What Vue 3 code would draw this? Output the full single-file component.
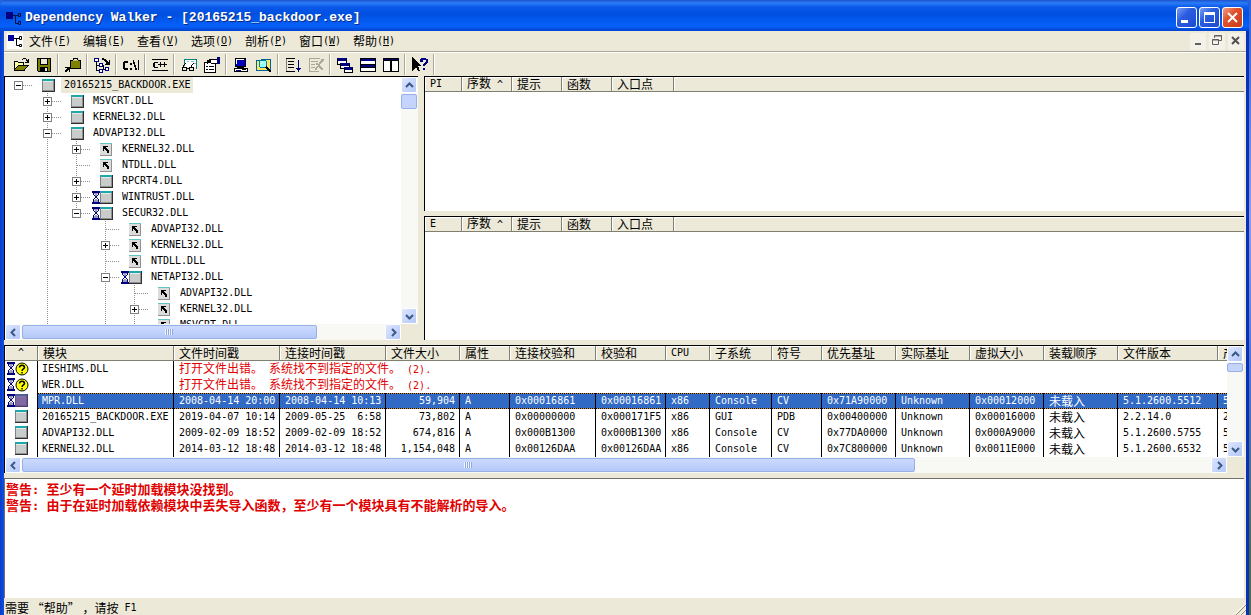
<script setup>
const menus = [
  ['文件', 'F'], ['编辑', 'E'], ['查看', 'V'], ['选项', 'O'],
  ['剖析', 'P'], ['窗口', 'W'], ['帮助', 'H'],
]

const icons = {
  open: '<path fill="#000" d="M1 4h4v1h6v3h-1V6H5V5H2v7H1zM1 13v-1h1v-1h1v-1h1V9h1V8h11v1h-1v1h-1v1h-1v1h-1v2H1zM9 2h1V1h3v1h-3v1H9zM13 2h1v1h1V2h1v4h-4V5h2V4h-1z"/><path fill="#ffffa0" d="M2 5h3v1h5v2H5v1H4v1H3v1H2z"/><path fill="#808000" d="M5 9h9v1h-1v1h-1v1h-1v1H2v-1h1v-1h1v-1h1z"/>',
  save: '<path fill="#000" d="M1 1h14v14H2v-1H1z"/><path fill="#808000" d="M2 2h2v6h8V2h2v12h-2v-4H4v4H2z"/><path fill="#ece9d8" d="M5 2h6v5H5zM9 11h2v3H9z"/>',
  config: '<path fill="#000" d="M8 1h5v2h3v9H5V3h3z"/><path fill="#808000" d="M6 4h9v7H6z"/><path fill="#ece9d8" d="M9 2h3v1H9z"/><path fill="#c0c060" d="M8 3h5v1H8z"/><path fill="#000" d="M0 10h5v5H4v-2H3v1H2v1H0v-2h1v-1h1v-1H0z"/>',
  tree: '<path fill="#000080" d="M0 1h5v4H0zM5 6h4v4H5zM5 12h4v4H5zM11 10h4v4h-4z"/><path fill="#fff" d="M1 2h3v2H1zM6 7h2v2H6zM6 13h2v2H6zM12 11h2v2h-2z"/><path fill="#000" d="M2 5h1v9H2zM3 8h2v1H3zM3 13h2v1H3zM9 8h1v4h1v1H9zM8 1h2v1h2v1h1v1h1v1h1V3h1v5h-5V7h1V5h-1V4h-1V3H8z"/>',
  path: '<path fill="#000" d="M1 4h4v2H2v5h3v2H1v-1H0V5h1zM7 6h2v2H7zM7 11h2v2H7zM10 3h1v2h1v3h1v3h1v2h-2v-3h-1V7h-1zM15 3h1v10h-1z"/>',
  cpp: '<path fill="#000" d="M0 2h16v1H0zM0 13h16v1H0zM2 5h4v1H3v4h3v1H2v-1H1V6h1zM6 7h2V5h1v2h2v1H9v2H8V8H6zM11 7h1V5h1v2h2v1h-2v2h-1V8h-1z"/>',
  glasses: '<path fill="#008080" d="M3 2h12v1H3zM3 3h1v6H3zM15 2h1v10h-1z"/><path fill="#fff" d="M4 3h11v7H4z"/><path fill="#80c0c0" d="M6 4h2v1H6zM10 4h3v1h-3zM12 6h3v1h-3z"/><path fill="none" stroke="#000" d="M1.500 10.500h4v3h-4zM8.500 10.500h4v3h-4zM5.500 11.500h3M2.500 10.500v-2l2-2M10.500 10.500v-2l2-2"/>',
  props: '<path fill="#000" d="M0 5h12v11H0z"/><path fill="#fff" d="M1 6h10v9H1z"/><path fill="#000" d="M2 9h2v1H2zM5 9h5v1H5zM2 12h2v1H2zM5 12h5v1H5zM3 3h2v1h2v1H4v2H3zM5 2h9v1H5zM5 3h2v3H5zM7 6h6v1H7z"/><path fill="#fff" d="M7 3h6v3H7z"/><path fill="#000080" d="M13 0h3v7h-3z"/>',
  computer: '<path fill="#000" d="M2 1h11v9H2zM1 11h14v4H1z"/><path fill="#0000c0" d="M3 2h9v7H3z"/><path fill="#fff" d="M3 2h8v1H4v4H3zM2 12h12v2H2z"/><path fill="#000" d="M4 10h7v1H4zM9 12h4v1H9z"/><path fill="#000080" d="M3 13h5v1H3z"/>',
  search: '<path fill="#0060a0" d="M0 13V3h5V2h10v12H0z"/><path fill="#ffe860" d="M1 4h5V3h8v10H1z"/><circle cx="7" cy="7" r="4" fill="#9ff" stroke="#0080a0"/><path stroke="#000" stroke-width="2" d="M10 10l5 5"/><path stroke="#fff" d="M5 7l2-2"/>',
  order: '<path fill="#000" d="M1 1h9v1H1zM1 14h9v1H1zM3 4h6v1H3zM3 7h6v1H3zM3 10h6v1H3z"/><path fill="#808080" d="M1 2h1v12H1z"/><path fill="#000080" d="M13 3h1v8h2l-2.500 4-2.500-4h2z"/>',
  stop: '<path fill="#aca899" d="M1 1h11v1H2v12h9v1H1zM3 4h7v1H3zM3 7h4v1H3zM3 10h4v1H3zM13 2h3v2h-1v1h-1v1h-1v1h-1v2h1v1h1v1h1v2h-2v-1h-1v-1h-1v-1h-1v1H9v2H7v-2h1v-1h1V9h1V8H8V6h2v1h1V5h1V4h1z"/>',
  cascade: '<path fill="#000080" d="M0 1h10v3H0zM3 6h10v3H3zM7 10h9v3H7z"/><path fill="#fff" d="M1 4h8v2H1zM4 9h8v1H4zM8 13h7v2H8z"/><path fill="none" stroke="#000" d="M.5 1.500v6h3M9.500 1.500v4M3.500 6.500v5h4M12.500 6.500v4M7.500 10.500v5h8v-5"/>',
  horizontal: '<path fill="#000" d="M0 1h16v14H0z"/><path fill="#fff" d="M1 4h14v3H1zM1 11h14v3H1z"/><path fill="#000080" d="M1 2h14v2H1zM1 8h14v2H1z"/>',
  vertical: '<path fill="#000" d="M0 1h16v14H0z"/><path fill="#fff" d="M1 4h6v10H1zM9 4h6v10H9z"/><path fill="#000080" d="M1 2h6v1H1zM9 2h6v1H9z"/>',
  help: '<path fill="#000" d="M0 0l9 9H6l2 5H6l-2-4-4 4z"/><path fill="#000080" d="M9 1h5v1h2v4h-1v1h-1v1h-1v1h-2V7h1V6h1V5h1V3h-3v2H8V2h1zM11 11h2v2h-2z"/>',
}

const tools = [
  [['open', '打开'], ['save', '保存']],
  [['config', '配置']],
  [['tree', '自动展开']],
  [['path', '完整路径']],
  [['cpp', '还原 C++ 函数']],
  [['glasses', '查看模块'], ['props', '属性']],
  [['computer', '系统信息'], ['search', '搜索顺序']],
  [['order', '开始剖析'], ['stop', '停止剖析']],
  [['cascade', '层叠'], ['horizontal', '水平平铺'], ['vertical', '垂直平铺']],
  [['help', '上下文帮助']],
]

/* guides: one code per indent column.
   ' ' blank, '|' line through, '+' / '-' box, 'T' branch.
   up / down: whether the line goes on above and below the node */
const nodes = [
  { name: '20165215_BACKDOOR.EXE', guides: '-', up: false, down: false, kind: 'module', selected: true },
  { name: 'MSVCRT.DLL', guides: ' +', up: true, down: true, kind: 'module' },
  { name: 'KERNEL32.DLL', guides: ' +', up: true, down: true, kind: 'module' },
  { name: 'ADVAPI32.DLL', guides: ' -', up: true, down: true, kind: 'module' },
  { name: 'KERNEL32.DLL', guides: ' |+', up: true, down: true, kind: 'dup' },
  { name: 'NTDLL.DLL', guides: ' |T', up: true, down: true, kind: 'dup' },
  { name: 'RPCRT4.DLL', guides: ' |+', up: true, down: true, kind: 'module' },
  { name: 'WINTRUST.DLL', guides: ' |+', up: true, down: true, kind: 'module', delay: true },
  { name: 'SECUR32.DLL', guides: ' |-', up: true, down: false, kind: 'module', delay: true },
  { name: 'ADVAPI32.DLL', guides: ' | T', up: true, down: true, kind: 'dup' },
  { name: 'KERNEL32.DLL', guides: ' | +', up: true, down: true, kind: 'dup' },
  { name: 'NTDLL.DLL', guides: ' | T', up: true, down: true, kind: 'dup' },
  { name: 'NETAPI32.DLL', guides: ' | -', up: true, down: true, kind: 'module', delay: true },
  { name: 'ADVAPI32.DLL', guides: ' | |T', up: true, down: true, kind: 'dup' },
  { name: 'KERNEL32.DLL', guides: ' | |+', up: true, down: true, kind: 'dup' },
  { name: 'MSVCRT.DLL', guides: ' | |T', up: true, down: true, kind: 'dup' },
]

const lists = [
  { id: 'imports', label: '导入', first: 'PI' },
  { id: 'exports', label: '导出', first: 'E' },
]

const columns = [
  ['^', 33], ['模块', 136], ['文件时间戳', 106], ['连接时间戳', 106], ['文件大小', 74],
  ['属性', 50], ['连接校验和', 86], ['校验和', 70], ['CPU', 44], ['子系统', 62],
  ['符号', 50], ['优先基址', 74], ['实际基址', 74], ['虚拟大小', 74], ['装载顺序', 74],
  ['文件版本', 100], ['产品版本', 100],
]

const missing = ['IESHIMS.DLL', 'WER.DLL']

const modules = [
  ['MPR.DLL', '2008-04-14 20:00', '2008-04-14 10:13', '59,904', 'A', '0x00016861', '0x00016861', 'x86', 'Console', 'CV', '0x71A90000', 'Unknown', '0x00012000', '未载入', '5.1.2600.5512', '5.1.2600.5512'],
  ['20165215_BACKDOOR.EXE', '2019-04-07 10:14', '2009-05-25  6:58', '73,802', 'A', '0x00000000', '0x000171F5', 'x86', 'GUI', 'PDB', '0x00400000', 'Unknown', '0x00016000', '未载入', '2.2.14.0', '2.2.14.0'],
  ['ADVAPI32.DLL', '2009-02-09 18:52', '2009-02-09 18:52', '674,816', 'A', '0x000B1300', '0x000B1300', 'x86', 'Console', 'CV', '0x77DA0000', 'Unknown', '0x000A9000', '未载入', '5.1.2600.5755', '5.1.2600.5755'],
  ['KERNEL32.DLL', '2014-03-12 18:48', '2014-03-12 18:48', '1,154,048', 'A', '0x00126DAA', '0x00126DAA', 'x86', 'Console', 'CV', '0x7C800000', 'Unknown', '0x0011E000', '未载入', '5.1.2600.6532', '5.1.2600.6532'],
]

const isHan = (text) => /[\u4e00-\u9fff]/.test(text)

const hourglass = '<path fill="#000080" d="M0 0h8v2H0zM0 11h8v2H0zM1 2h1v2H1zM6 2h1v2H6zM2 4h1v1H2zM5 4h1v1H5zM3 5h2v2H3zM2 7h1v1H2zM5 7h1v1H5zM1 8h1v3H1zM6 8h1v3H6z"/><path fill="#9a9ab8" d="M2 2h4v1H2zM3 3h2v2H3zM3 8h2v1H3zM2 9h4v2H2z"/>'
const moduleIcon = '<path fill="#303030" d="M0 0h13v13H0z"/><path fill="#e8e8e8" d="M0 0h12v12H0z"/><path fill="#808080" d="M0 0h1v12H0z"/><path fill="#c8ccca" d="M1 3h10v8H1z"/><path fill="#20a8a8" d="M0 0h12v2H0z"/><path fill="#909090" d="M11 2h1v10h-1zM1 11h11v1H1z"/>'
const dupIcon = '<path fill="#909090" d="M0 0h12v13H0z"/><path fill="#dcdcdc" d="M0 1h11v11H0z"/><path fill="#60c4c0" d="M0 0h12v1H0z"/><path fill="#000" d="M3 3h5v1H6v1h1v1h1v1h1v3H7V8H6V7H5V6H4v2H3z"/>'
</script>

<template>
  <div class="window">
    <header class="title">
      <svg class="app-icon" viewBox="0 0 16 16"><path fill="#000080" d="M1 2h7v7H1z" /><path fill="none" stroke="#001040" d="M8 5.500h5M10.500 5.500v8h3M13.500 3.500h2v3h-2zM13.500 11.500h2v3h-2z" /></svg>
      <h1>Dependency Walker - [20165215_backdoor.exe]</h1>
      <div class="caption">
        <button aria-label="最小化"><svg viewBox="0 0 19 19"><path fill="#fff" d="M4 12h7v3H4z" /></svg></button>
        <button aria-label="最大化"><svg viewBox="0 0 19 19"><path fill="#fff" fill-rule="evenodd" d="M4 4h11v11H4zM5 7v7h9V7z" /></svg></button>
        <button class="close" aria-label="关闭"><svg viewBox="0 0 19 19"><path stroke="#fff" stroke-width="2" d="M5 5l9 9M14 5l-9 9" /></svg></button>
      </div>
    </header>

    <div class="menubar">
      <svg class="doc-icon" viewBox="0 0 16 16"><path fill="#fff" d="M0 0h16v16H0z" /><path fill="#0000a0" d="M1 2h6v6H1z" /><path fill="none" stroke="#000" d="M7 5.500h5M9.500 5.500v7h3M12.500 3.500h2v3h-2zM12.500 11.500h2v2h-2z" /></svg>
      <nav>
        <button v-for="[name, key] in menus" :key="key" class="menu"><span class="han">{{ name }}</span>(<u>{{ key }}</u>)</button>
      </nav>
      <div class="child-caption">
        <button aria-label="最小化文档"><svg viewBox="0 0 14 14"><path fill="#606060" d="M4 9h6v2H4z" /></svg></button>
        <button aria-label="还原文档"><svg viewBox="0 0 14 14"><path fill="none" stroke="#606060" d="M4.500 4V1.500h7v5H9M2.500 5.500h6v5h-6zM2 6h7M4 2h8" /></svg></button>
        <button aria-label="关闭文档"><svg viewBox="0 0 14 14"><path stroke="#505050" stroke-width="2" d="M3 3l7 7M10 3l-7 7" /></svg></button>
      </div>
    </div>

    <div class="toolbar">
      <div v-for="(group, g) in tools" :key="g" class="group">
        <button v-for="[id, label] in group" :key="id" :aria-label="label"><svg viewBox="0 0 16 16" v-html="icons[id]"></svg></button>
      </div>
    </div>

    <main class="work">
      <div class="upper">
        <section class="panel scroller" aria-label="依赖树">
          <ul class="tree">
            <li v-for="(node, n) in nodes" :key="n">
              <svg v-for="(code, c) in node.guides.split('')" :key="c" class="guide" viewBox="0 0 29 16">
                <g fill="none" stroke="#909090" stroke-dasharray="1 1">
                  <path v-if="code === '|'" d="M13.500 0v16" />
                  <template v-if="'+-T'.includes(code)">
                    <path v-if="node.up" d="M13.500 0v8" />
                    <path v-if="node.down" d="M13.500 8v8" />
                    <path d="M14 8.500h14" />
                  </template>
                </g>
                <template v-if="'+-'.includes(code)">
                  <path fill="#fff" stroke="#808080" d="M9.500 4.500h8v8h-8z" />
                  <path fill="#000" d="M11 8h5v1h-5z" />
                  <path v-if="code === '+'" fill="#000" d="M13 6h1v5h-1z" />
                </template>
              </svg>
              <svg class="delay" viewBox="0 0 8 13" v-html="node.delay ? hourglass : ''"></svg>
              <svg class="module" viewBox="0 0 13 13" v-html="node.kind === 'dup' ? dupIcon : moduleIcon"></svg>
              <span class="label" :class="{ selected: node.selected }">{{ node.name }}</span>
            </li>
          </ul>
          <div class="bar vertical">
            <button aria-label="向上"><svg viewBox="0 0 9 9"><path d="M1 6l3.500-3.500L8 6" /></svg></button>
            <div class="track"><div class="thumb small"></div></div>
            <button aria-label="向下"><svg viewBox="0 0 9 9"><path d="M1 3l3.500 3.500L8 3" /></svg></button>
          </div>
          <div class="bar horizontal">
            <button aria-label="向左"><svg viewBox="0 0 9 9"><path d="M6 1L2.500 4.500 6 8" /></svg></button>
            <div class="track"><div class="thumb tree-thumb"><i></i></div></div>
            <button aria-label="向右"><svg viewBox="0 0 9 9"><path d="M3 1l3.500 3.500L3 8" /></svg></button>
          </div>
        </section>

        <div class="lists">
          <section v-for="list in lists" :key="list.id" class="panel" :aria-label="list.label">
            <table class="grid">
              <colgroup><col class="w37"><col class="w50"><col class="w50"><col class="w50"><col class="w62"><col></colgroup>
              <thead>
                <tr>
                  <th>{{ list.first }}</th>
                  <th><span class="han">序数</span> ^</th>
                  <th class="han">提示</th>
                  <th class="han">函数</th>
                  <th class="han">入口点</th>
                  <th></th>
                </tr>
              </thead>
            </table>
          </section>
        </div>
      </div>

      <section class="panel scroller" aria-label="模块列表">
        <div class="view">
          <table class="grid modules">
            <colgroup><col v-for="[name, width] in columns" :key="name" :style="{ width: width + 'px' }"></colgroup>
            <thead>
              <tr><th v-for="[name] in columns" :key="name" :class="{ han: isHan(name), sort: name === '^' }">{{ name }}</th></tr>
            </thead>
            <tbody>
              <tr v-for="name in missing" :key="name">
                <td class="mark">
                  <svg class="delay" viewBox="0 0 8 13" v-html="hourglass"></svg>
                  <svg class="unknown" viewBox="0 0 14 14"><circle cx="7" cy="7" r="6" fill="#ff0" stroke="#000" /><path fill="none" stroke="#000" stroke-width="1.500" d="M4.500 5.500c0-3 5-3 5 0 0 1.500-2.500 1.500-2.500 3.500M7 10v1.500" /></svg>
                </td>
                <td>{{ name }}</td>
                <td class="error" colspan="15"><span class="han">打开文件出错。</span> <span class="han">系统找不到指定的文件。</span> (2).</td>
              </tr>
              <tr v-for="(row, r) in modules" :key="row[0]" :class="{ current: r === 0 }">
                <td class="mark">
                  <svg class="delay" viewBox="0 0 8 13" v-html="r === 0 ? hourglass : ''"></svg>
                  <svg class="module" viewBox="0 0 13 13">
                    <g v-html="moduleIcon"></g>
                    <path v-if="r === 0" fill="#604090" fill-opacity=".7" d="M0 0h13v13H0z" />
                  </svg>
                </td>
                <td v-for="(cell, c) in row" :key="c" :class="{ han: isHan(cell), size: c === 3 }">{{ cell }}</td>
              </tr>
            </tbody>
          </table>
        </div>
        <div class="bar vertical">
          <button aria-label="向上"><svg viewBox="0 0 9 9"><path d="M1 6l3.500-3.500L8 6" /></svg></button>
          <div class="track"><div class="thumb tiny"></div></div>
          <button aria-label="向下"><svg viewBox="0 0 9 9"><path d="M1 3l3.500 3.500L8 3" /></svg></button>
        </div>
        <div class="bar horizontal">
          <button aria-label="向左"><svg viewBox="0 0 9 9"><path d="M6 1L2.500 4.500 6 8" /></svg></button>
          <div class="track"><div class="thumb module-thumb"><i></i></div></div>
          <button aria-label="向右"><svg viewBox="0 0 9 9"><path d="M3 1l3.500 3.500L3 8" /></svg></button>
        </div>
      </section>

      <section class="panel log" aria-label="日志">
        <p>警告<span>: </span>至少有一个延时加载模块没找到。</p>
        <p>警告<span>: </span>由于在延时加载依赖模块中丢失导入函数，至少有一个模块具有不能解析的导入。</p>
      </section>
    </main>

    <footer class="status">
      <span class="han">需要 “帮助” ，请按</span>&nbsp;F1
      <svg class="grip" viewBox="0 0 11 10"><path stroke="#fff" d="M0 9L9 0M5 10l6-6" /><path stroke="#908c78" stroke-width="1" d="M1 10l10-10M6 10l5-5" /></svg>
    </footer>
  </div>
</template>

<style>
body {
  margin: 0;
  background: linear-gradient(#2a62dc, #8d9be8 35%, #4c74d8 60%, #4d6a4c 90%);
}
</style>

<style scoped>
.window {
  box-sizing: border-box;
  display: flex;
  flex-direction: column;
  height: 100vh;
  margin-right: 2px;
  padding: 0 3px 0 4px;
  overflow: hidden;
  border-radius: 6px 6px 0 0;
  background: linear-gradient(90deg, #0a3bc8 0, #0f4fe0 4px, #0f4fe0 50%, #0831b8 100%);
  color: #000;
  font: 10px/16px "DejaVu Sans Mono", "Noto Sans CJK SC", monospace;
}
button {
  box-sizing: border-box;
  display: flex;
  align-items: center;
  justify-content: center;
  margin: 0;
  padding: 0;
  border: 0;
  background: none;
  color: inherit;
  font: inherit;
}
svg { flex: none; display: block; }
.han { font-family: "Noto Sans CJK SC", sans-serif; font-size: 12px; }

.title {
  display: flex;
  align-items: center;
  flex: none;
  height: 31px;
  margin: 0 -3px 0 -4px;
  padding: 4px 6px 0 5px;
  box-sizing: border-box;
  background: linear-gradient(#1d52cc 0, #2b7cf8 3px, #0a58ea 7px, #0050e0 14px, #0560fa 26px, #0044d0 31px);
}
.app-icon { width: 16px; height: 16px; }
.title h1 {
  flex: 1;
  margin: 0 0 0 4px;
  color: #fff;
  font: bold 13px/18px "Liberation Mono", monospace;
  text-shadow: 1px 1px #0a2a80;
  white-space: nowrap;
}
.caption { display: flex; gap: 2px; }
.caption button {
  width: 21px;
  height: 21px;
  border: 1px solid #fff;
  border-radius: 3px;
  background: linear-gradient(135deg, #7aa0f4, #2a5ce0 40%, #1c4ad0);
}
.caption .close { background: linear-gradient(135deg, #f0a088, #e0512c 40%, #c83c18); }
.caption svg { width: 19px; height: 19px; }

.menubar {
  display: flex;
  align-items: center;
  flex: none;
  height: 20px;
  padding: 0 2px 0 3px;
  border-bottom: 1px solid #aca899;
  background: #ece9d8;
}
.doc-icon { width: 16px; height: 16px; }
nav { display: flex; flex: 1; }
.menu { width: 54px; height: 19px; }
.child-caption { display: flex; gap: 3px; }
.child-caption button { width: 16px; height: 17px; background: #f3f1e8; }
.child-caption svg { width: 14px; height: 14px; }

.toolbar {
  display: flex;
  align-items: center;
  flex: none;
  height: 23px;
  padding: 0 5px;
  border-top: 1px solid #fff;
  background: #ece9d8;
}
.group { display: flex; margin-right: 2px; padding-right: 2px; border-right: 1px solid #aca899; box-shadow: 1px 0 #fff; }
.group + .group { padding-left: 1px; }
.group button { width: 23px; height: 21px; }
.group svg { width: 16px; height: 16px; shape-rendering: crispEdges; }

.work {
  display: grid;
  grid-template-rows: 264fr 128fr 120fr;
  grid-template-columns: minmax(0, 1fr);
  gap: 5px;
  flex: 1;
  min-height: 0;
  padding: 0 2px 2px 0;
  background: #ece9d8;
}
.upper { display: grid; grid-template-columns: 414fr 820fr; gap: 6px; min-height: 0; }
.lists { display: grid; grid-template-rows: 135fr 124fr; gap: 5px; min-width: 0; }
.panel {
  box-sizing: border-box;
  min-width: 0;
  min-height: 0;
  overflow: hidden;
  border-top: 1px solid #000;
  border-left: 1px solid #000;
  background: #fff;
}
.scroller { display: grid; grid-template: minmax(0, 1fr) 16px / minmax(0, 1fr) 17px; background: #ece9d8; }

.tree { margin: 0; padding: 0; overflow: hidden; background: #fff; list-style: none; }
.tree li { display: flex; align-items: center; height: 16px; }
.guide { width: 29px; height: 16px; shape-rendering: crispEdges; }
.delay { width: 8px; height: 13px; shape-rendering: crispEdges; }
.module { width: 13px; height: 13px; shape-rendering: crispEdges; }
.label { margin-left: 6px; padding: 0 3px; white-space: nowrap; }
.label.selected { background: #ece9d8; }

.bar { display: flex; background: #f8f8f4; }
.bar.vertical { flex-direction: column; }
.bar button {
  flex: none;
  width: 16px;
  height: 16px;
  border: 1px solid #fff;
  border-radius: 2px;
  background: linear-gradient(135deg, #dce6ff, #b4c8f8);
}
.bar button svg { width: 9px; height: 9px; }
.bar path { fill: none; stroke: #3c5888; stroke-width: 2; }
.track { display: flex; flex: 1; min-width: 0; min-height: 0; }
.vertical .track { flex-direction: column; }
.thumb {
  box-sizing: border-box;
  display: flex;
  align-items: center;
  justify-content: center;
  border: 1px solid #98b0e8;
  border-radius: 2px;
  background: #c4d4fc;
}
.horizontal .thumb { margin: 1px; background: linear-gradient(#ccdaff, #b4c8f8); }
.small { height: 15px; margin: 1px 1px 0 0; }
.tiny { height: 9px; margin: 1px 1px 0 0; }
.tree-thumb { width: 81%; }
.module-thumb { width: 75%; }
.thumb i { width: 8px; height: 6px; background: repeating-linear-gradient(90deg, #f0f4ff 0 1px, #90a8e0 1px 2px); }

.view { overflow: hidden; background: #fff; }
.grid { width: 100%; border-spacing: 0; table-layout: fixed; }
.grid .han { line-height: 12px; }
.w37 { width: 37px; }
.w50 { width: 50px; }
.w62 { width: 62px; }
th, td { box-sizing: border-box; padding: 0 0 0 5px; text-align: left; white-space: pre; }
th {
  height: 15px;
  border-right: 1px solid #808070;
  border-bottom: 1px solid #808070;
  box-shadow: inset 1px 1px #fff;
  background: #ece9d8;
  font-weight: normal;
  line-height: 12px;
}
th:last-child { border-right: 0; }
th.sort { padding: 0; text-align: center; }
.modules { min-width: 1313px; }
td { height: 16px; border-right: 1px solid #000; line-height: 14px; }
td:nth-child(2) { padding-left: 4px; }
td.mark { padding: 0 0 0 2px; }
.mark svg { display: inline-block; vertical-align: top; }
.unknown { width: 14px; height: 14px; }
td.error { border-right: 0; padding-left: 5px; color: #e00000; }
td.size { padding: 0 4px 0 0; text-align: right; }
.current td:not(.mark) {
  background: repeating-linear-gradient(90deg, #000 0 1px, #d09030 1px 2px) top / 100% 1px no-repeat,
    repeating-linear-gradient(90deg, #000 0 1px, #d09030 1px 2px) bottom / 100% 1px no-repeat, #316ac5;
  color: #fff;
}

.log { padding: 2px 1px; border-color: #707068; }
.log p { margin: 0; color: #e00000; font: bold 13px/16px "Noto Sans CJK SC", sans-serif; }
.log span { font: bold 12px/12px "DejaVu Sans Mono", monospace; white-space: pre; }

.status { display: flex; align-items: center; flex: none; height: 15px; padding-left: 1px; background: #ece9d8; }
.grip { width: 11px; height: 10px; margin: auto 0 0 auto; }
</style>
